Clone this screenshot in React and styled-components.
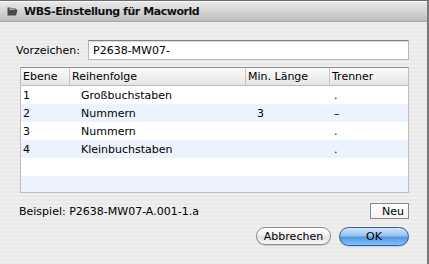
import React from "react";
import styled, { createGlobalStyle } from "styled-components";

const rows = [
  { level: "1", order: "Großbuchstaben", min: "", sep: "." },
  { level: "2", order: "Nummern", min: "3", sep: "–" },
  { level: "3", order: "Nummern", min: "", sep: "." },
  { level: "4", order: "Kleinbuchstaben", min: "", sep: "." },
  { level: "", order: "", min: "", sep: "" },
  { level: "", order: "", min: "", sep: "" },
];

const cols = "49px 176px 84px 1fr";

const App = () => {
  return (
    <>
      <GlobalStyle />
      <Window>
        <TitleBar>
          <svg width="11" height="9" viewBox="0 0 11 9">
            <path d="M0.5 1.5 L0.5 8.5 L9 8.5 L10.5 3 L3 3 L2 1 Z" fill="#4a4a4a" />
            <path d="M0.5 1 L3.5 1 L4.5 2 L9 2 L9 3" fill="none" stroke="#4a4a4a" />
          </svg>
          <span>WBS-Einstellung für Macworld</span>
        </TitleBar>
        <Content>
          <FieldRow>
            <Label>Vorzeichen:</Label>
            <Input defaultValue="P2638-MW07-" />
          </FieldRow>
          <Table>
            <HeaderRow>
              <HeadCell>Ebene</HeadCell>
              <HeadCell>Reihenfolge</HeadCell>
              <HeadCell>Min. Länge</HeadCell>
              <HeadCell last>Trenner</HeadCell>
            </HeaderRow>
            {rows.map((r, i) => (
              <Row key={i} alt={i % 2 === 1}>
                <Cell>{r.level}</Cell>
                <Cell indent>{r.order}</Cell>
                <Cell indent>{r.min}</Cell>
                <Cell sep>{r.sep}</Cell>
              </Row>
            ))}
          </Table>
          <ExampleRow>
            <Example>Beispiel: P2638-MW07-A.001-1.a</Example>
            <SquareButton>Neu</SquareButton>
          </ExampleRow>
          <Buttons>
            <PillButton>Abbrechen</PillButton>
            <PillButton primary>OK</PillButton>
          </Buttons>
        </Content>
      </Window>
    </>
  );
};

const GlobalStyle = createGlobalStyle`
  html, body {
    margin: 0;
    padding: 0;
    background: #ececec;
  }
  body {
    font-family: "DejaVu Sans", "Liberation Sans", sans-serif;
    font-size: 11px;
    color: #000;
  }
`;

const Window = styled.div`
  width: 429px;
  height: 264px;
  box-sizing: border-box;
  display: flex;
  flex-direction: column;
  border-top: 1px solid #6e6e6e;
  border-right: 2px solid #7a7a7a;
  background: repeating-linear-gradient(
    to bottom,
    #efefef 0px,
    #efefef 2px,
    #e9e9e9 2px,
    #e9e9e9 4px
  );
`;

const TitleBar = styled.div`
  height: 21px;
  display: flex;
  align-items: center;
  gap: 6px;
  padding-left: 7px;
  box-sizing: border-box;
  background: linear-gradient(to bottom, #e8e8e8 0%, #d4d4d4 50%, #bdbdbd 100%);
  border-top: 1px solid #f6f6f6;
  border-bottom: 1px solid #a6a6a6;
  span {
    font-weight: bold;
    font-size: 11px;
    letter-spacing: -0.45px;
    color: #111;
  }
`;

const Content = styled.div`
  flex: 1;
  display: flex;
  flex-direction: column;
  padding: 18px 18px 0 16px;
`;

const FieldRow = styled.div`
  display: flex;
  align-items: center;
  gap: 8px;
`;

const Label = styled.span`
  font-size: 11px;
`;

const Input = styled.input`
  flex: 1;
  height: 20px;
  box-sizing: border-box;
  border: 1px solid #b8b8b8;
  border-top: 1px solid #808080;
  background: #fff;
  font-family: inherit;
  font-size: 11px;
  padding: 0 4px;
  outline: none;
  box-shadow: inset 0 1px 0 #dcdcdc;
`;

const Table = styled.div`
  margin: 7px 0 0 4px;
  height: 126px;
  box-sizing: border-box;
  background: #fff;
  border: 1px solid #bdbdbd;
  border-top: 1px solid #8e8e8e;
  display: flex;
  flex-direction: column;
  overflow: hidden;
`;

const HeaderRow = styled.div`
  display: grid;
  grid-template-columns: ${cols};
  height: 17px;
  flex: none;
  background: linear-gradient(to bottom, #fbfbfb 0%, #eeeeee 60%, #e4e4e4 100%);
  border-bottom: 1px solid #bcbcbc;
`;

const HeadCell = styled.div`
  display: flex;
  align-items: center;
  padding-left: 2px;
  border-right: ${(props) => (props.last ? "none" : "1px solid #c4c4c4")};
  font-size: 11px;
`;

const Row = styled.div`
  display: grid;
  grid-template-columns: ${cols};
  height: 18px;
  flex: none;
  background: ${(props) => (props.alt ? "#edf3fe" : "#ffffff")};
`;

const Cell = styled.div`
  display: flex;
  align-items: center;
  font-size: 11px;
  padding-left: ${(props) => (props.indent ? "11px" : props.sep ? "4px" : "2px")};
`;

const ExampleRow = styled.div`
  display: flex;
  justify-content: space-between;
  align-items: center;
  margin: 10px 0 0 3px;
`;

const Example = styled.span`
  font-size: 11px;
`;

const SquareButton = styled.button`
  width: 39px;
  height: 16px;
  box-sizing: border-box;
  border: 1px solid #8a8a8a;
  background: linear-gradient(to bottom, #ffffff, #f2f2f2);
  font-family: inherit;
  font-size: 11px;
  padding: 0 4px 0 0;
  text-align: right;
  color: #000;
`;

const Buttons = styled.div`
  display: flex;
  justify-content: flex-end;
  gap: 8px;
  margin-top: 8px;
`;

const PillButton = styled.button`
  height: ${(props) => (props.primary ? "19px" : "18px")};
  width: ${(props) => (props.primary ? "70px" : "75px")};
  box-sizing: border-box;
  border-radius: 10px;
  font-family: inherit;
  font-size: 11px;
  padding: 0;
  color: #000;
  border: 1px solid ${(props) => (props.primary ? "#34619c" : "#8c8c8c")};
  background: ${(props) =>
    props.primary
      ? "linear-gradient(to bottom, #cfe5fb 0%, #93c4f2 45%, #4f98e4 55%, #86c0f6 100%)"
      : "linear-gradient(to bottom, #ffffff 0%, #f2f2f2 45%, #e2e2e2 55%, #f8f8f8 100%)"};
  box-shadow: 0 1px 1px rgba(0, 0, 0, 0.15);
`;

export default App;
